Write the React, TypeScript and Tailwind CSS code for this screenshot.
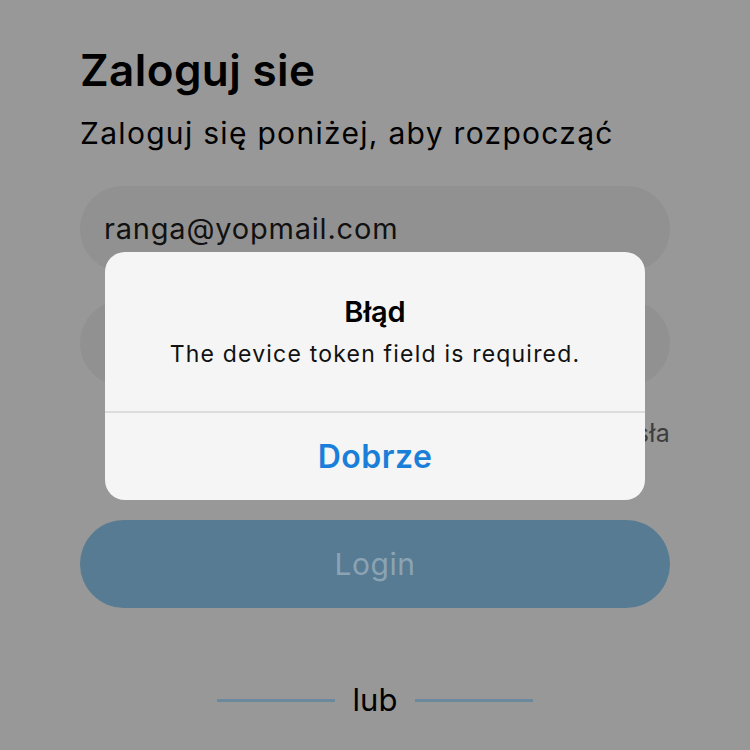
import React from "react";

export default function App() {
  return (
    <div className="relative w-[750px] h-[750px] overflow-hidden bg-[#989898] font-['Inter','Liberation_Sans',sans-serif]">
      {/* Login screen (dimmed) */}
      <div className="flex flex-col px-[80px] pt-[44px]">
        <h1 className="text-[44px] leading-[52px] font-semibold text-black tracking-[0.4px]">Zaloguj sie</h1>
        <p className="mt-[17px] text-[30px] leading-[40px] text-black tracking-[1.3px]">Zaloguj się poniżej, aby rozpocząć</p>

        <div className="mt-[33px] h-[86px] rounded-full bg-[#919191] flex items-center px-[24px]">
          <span className="text-[29px] text-[#111] tracking-[0.8px]">ranga@yopmail.com</span>
        </div>
        <div className="mt-[28px] h-[86px] rounded-full bg-[#919191]" />

        <div className="mt-[30px] flex justify-end">
          <span className="text-[25px] leading-[34px] text-[#3d3d3d] tracking-[0.3px]">Zapomniałeś hasła</span>
        </div>

        <div className="mt-[70px] h-[88px] rounded-full bg-[#567b93] flex items-center justify-center">
          <span className="text-[30px] text-[#8ba3b3] tracking-[0.5px]">Login</span>
        </div>

        <div className="mt-[72px] flex items-center justify-center gap-[18px]">
          <div className="w-[118px] h-[3px] bg-[#6c889c]" />
          <span className="text-[31px] leading-[40px] text-black">lub</span>
          <div className="w-[118px] h-[3px] bg-[#6c889c]" />
        </div>
      </div>

      {/* Alert */}
      <div className="absolute left-[105px] top-[252px] w-[540px] h-[248px] rounded-[20px] bg-[#f5f5f5] flex flex-col">
        <div className="flex flex-col items-center pt-[42px] h-[159px]">
          <h2 className="text-[29px] leading-[36px] font-semibold text-black">Błąd</h2>
          <p className="mt-[9px] text-[23px] leading-[30px] text-[#111] tracking-[1.2px]">The device token field is required.</p>
        </div>
        <div className="h-[2px] bg-[#dcdcdc]" />
        <div className="flex-1 flex items-center justify-center">
          <span className="text-[32px] font-semibold text-[#1a7fd9] tracking-[0.5px]">Dobrze</span>
        </div>
      </div>
    </div>
  );
}
